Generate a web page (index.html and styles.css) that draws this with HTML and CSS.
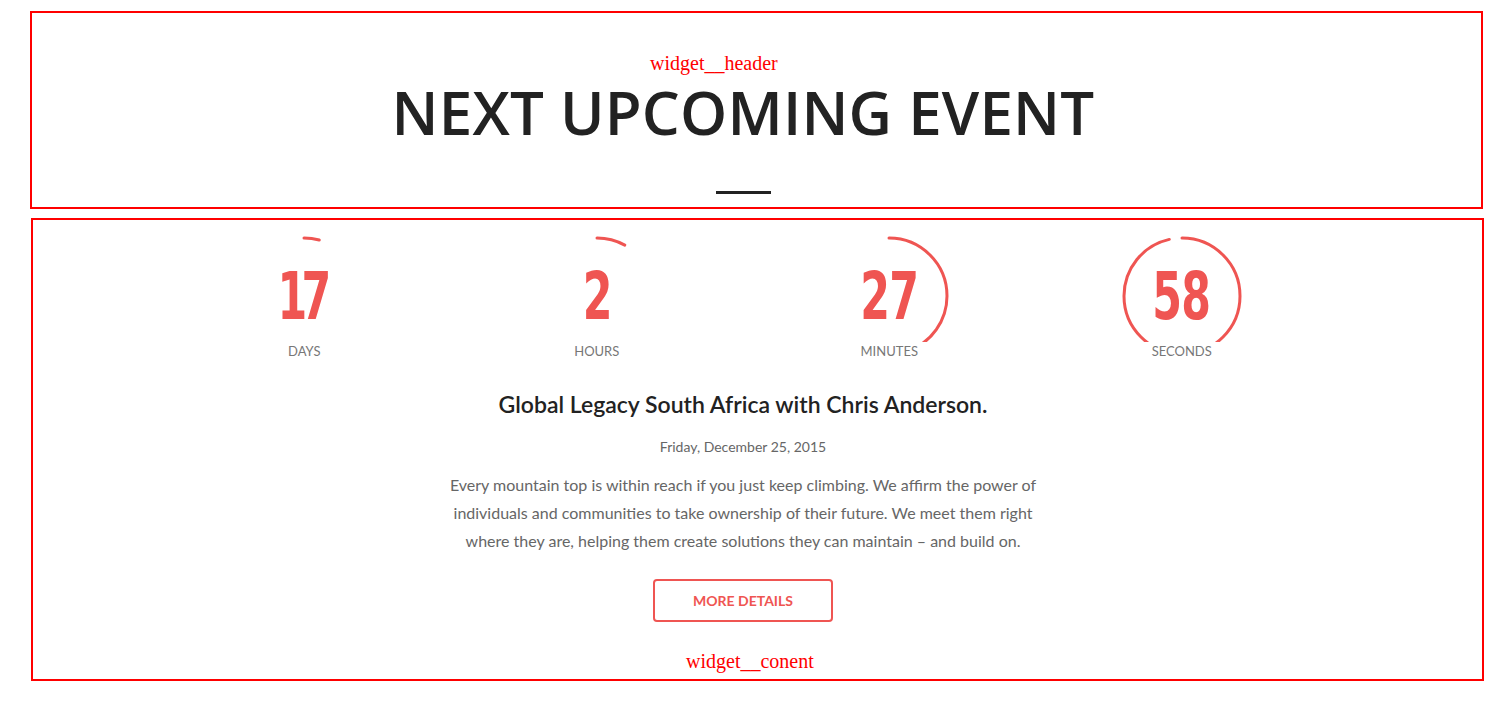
FILE: index.html
```html
<!DOCTYPE html>
<html lang="en">
<head>
<meta charset="utf-8">
<title>Next Upcoming Event</title>
<link rel="stylesheet" href="styles.css">
</head>
<body>
<div class="page">
  <section class="widget-header">
    <span class="tag tag-header">widget__header</span>
    <h2 class="widget-title">NEXT UPCOMING EVENT</h2>
    <span class="title-bar"></span>
  </section>
  <section class="widget-content">
    <div class="countdown">
      <div class="cd-item">
        <div class="cd-ring">
          <svg class="ring" viewBox="0 0 120 106" width="120" height="106"><circle cx="60" cy="60" r="58" class="arc" stroke-dasharray="15.5 400" transform="rotate(-90 60 60)"/></svg>
          <span class="cd-num cd-num-narrow">17</span>
        </div>
        <span class="cd-label">DAYS</span>
      </div>
      <div class="cd-item">
        <div class="cd-ring">
          <svg class="ring" viewBox="0 0 120 106" width="120" height="106"><circle cx="60" cy="60" r="58" class="arc" stroke-dasharray="29 400" transform="rotate(-90 60 60)"/></svg>
          <span class="cd-num">2</span>
        </div>
        <span class="cd-label">HOURS</span>
      </div>
      <div class="cd-item">
        <div class="cd-ring">
          <svg class="ring" viewBox="0 0 120 106" width="120" height="106"><circle cx="60" cy="60" r="58" class="arc" stroke-dasharray="162.5 400" transform="rotate(-90 60 60)"/></svg>
          <span class="cd-num">27</span>
        </div>
        <span class="cd-label">MINUTES</span>
      </div>
      <div class="cd-item">
        <div class="cd-ring">
          <svg class="ring" viewBox="0 0 120 106" width="120" height="106"><circle cx="60" cy="60" r="58" class="arc" stroke-dasharray="351 400" transform="rotate(-90 60 60)"/></svg>
          <span class="cd-num">58</span>
        </div>
        <span class="cd-label">SECONDS</span>
      </div>
    </div>
    <h3 class="event-title">Global Legacy South Africa with Chris Anderson.</h3>
    <p class="event-date">Friday, December 25, 2015</p>
    <p class="event-text">Every mountain top is within reach if you just keep climbing. We affirm the power of individuals and communities to take ownership of their future. We meet them right where they are, helping them create solutions they can maintain – and build on.</p>
    <a class="btn-more" href="#">MORE DETAILS</a>
    <span class="tag tag-content">widget__conent</span>
  </section>
</div>
</body>
</html>
```

FILE: styles.css
```css
html, body {
  margin: 0;
  padding: 0;
  background: #ffffff;
}

.page {
  padding: 11px 18px 0 30px;
  font-family: "Lato", "Liberation Sans", sans-serif;
}

.widget-header {
  position: relative;
  border: 2px solid #ff0000;
  height: 194px;
  box-sizing: content-box;
  padding: 0 27px 0 0;
  display: flex;
  flex-direction: column;
  align-items: center;
}

.tag {
  position: absolute;
  font-family: "Liberation Serif", "Times New Roman", serif;
  font-size: 20px;
  line-height: 23px;
  color: #ff0000;
  white-space: nowrap;
}

.tag-header {
  left: 618px;
  top: 39px;
}

.widget-title {
  margin: 63px 0 0;
  font-family: "Open Sans", sans-serif;
  font-weight: 600;
  font-size: 60px;
  line-height: 72px;
  color: #222222;
  letter-spacing: 0.2px;
}

.title-bar {
  display: block;
  width: 55px;
  height: 3px;
  background: #222222;
  margin-top: 43px;
}

.widget-content {
  position: relative;
  margin: 9px -1px 0 1px;
  border: 2px solid #ff0000;
  padding: 16px 29px 57px 0;
  display: flex;
  flex-direction: column;
  align-items: center;
  text-align: center;
}

.countdown {
  width: 1170px;
  display: grid;
  grid-template-columns: repeat(4, 1fr);
}

.cd-item {
  display: flex;
  flex-direction: column;
  align-items: center;
}

.cd-ring {
  display: grid;
  width: 120px;
  height: 106px;
}

.ring {
  grid-area: 1 / 1;
  display: block;
}

.arc {
  fill: none;
  stroke: #ef5552;
  stroke-width: 3;
  stroke-linecap: round;
}

.cd-num {
  grid-area: 1 / 1;
  justify-self: center;
  align-self: start;
  margin-top: 27px;
  font-family: "DejaVu Sans Condensed", "DejaVu Sans", sans-serif;
  font-stretch: condensed;
  font-weight: 700;
  font-size: 66px;
  line-height: 67px;
  color: #ef5552;
  letter-spacing: -1px;
  transform: scaleX(0.72);
}

.cd-num-narrow {
  letter-spacing: -8px;
  text-indent: -8px;
}

.cd-label {
  display: block;
  margin-top: 1px;
  font-size: 13px;
  line-height: 16px;
  color: #777777;
}

.event-title {
  margin: 30px 0 0;
  font-size: 23px;
  font-weight: 600;
  line-height: 30px;
  color: #222222;
}

.event-date {
  margin: 18px 0 0;
  font-size: 14px;
  line-height: 20px;
  color: #666666;
}

.event-text {
  width: 600px;
  margin: 14px 0 0;
  font-size: 16px;
  line-height: 28px;
  color: #666666;
}

.btn-more {
  display: flex;
  align-items: center;
  justify-content: center;
  box-sizing: border-box;
  width: 180px;
  height: 43px;
  margin-top: 24px;
  border: 2px solid #ef5552;
  border-radius: 4px;
  font-size: 14px;
  font-weight: 700;
  color: #ef5552;
  text-decoration: none;
}

.tag-content {
  left: 653px;
  bottom: 6px;
}
```
